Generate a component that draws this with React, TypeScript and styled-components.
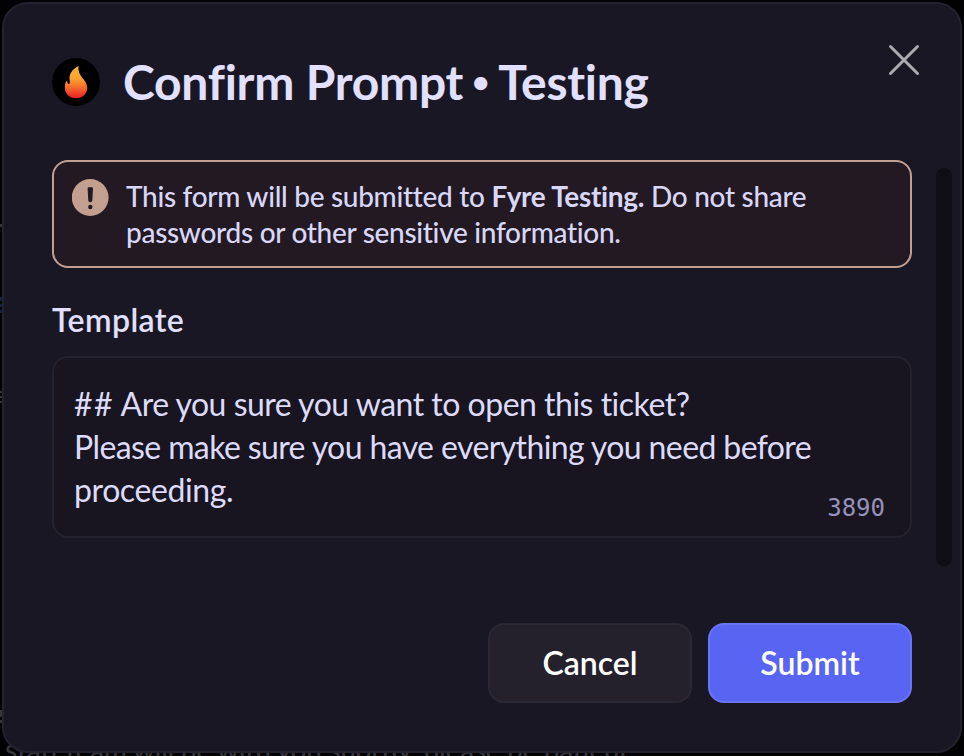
import React from "react";
import styled, { createGlobalStyle } from "styled-components";

const GlobalStyle = createGlobalStyle`
  *, *::before, *::after { box-sizing: border-box; }
  body {
    margin: 0;
    background: #020204;
    overflow: hidden;
    font-family: Lato, "Noto Sans", sans-serif;
    font-variant-ligatures: none;
  }
  button { font: inherit; }
`;

const Scene = styled.div`
  display: grid;
  grid-template: 756px / 964px;
  overflow: hidden;
  > * { grid-area: 1 / 1; }
`;

const Channel = styled.div`
  display: flex;
  flex-direction: column;
  justify-content: flex-end;
  overflow: hidden;
  color: #35353b;
`;

const Message = styled.p`
  margin: 0 0 -12px 5px;
  font-size: 28px;
  font-weight: 500;
  line-height: 38px;
  letter-spacing: -0.28px;
  white-space: nowrap;
`;

const Gutter = styled.div`
  display: flex;
  flex-direction: column;
  width: 3px;
  height: 756px;
  overflow: hidden;
`;

const Fragment = styled.span<{ $top: number; $height: number; $color: string }>`
  flex: none;
  height: ${(p) => p.$height}px;
  margin-top: ${(p) => p.$top}px;
  background: ${(p) => p.$color};
`;

const Dialog = styled.section`
  display: flex;
  flex-direction: column;
  width: 960px;
  height: 751px;
  margin: 2px;
  border: 2px solid #24222e;
  border-radius: 26px;
  background: #1a1724;
  overflow: hidden;
`;

const Header = styled.header`
  display: flex;
  flex: none;
  height: 156px;
  padding: 38px 38px 0 48px;
`;

const Avatar = styled.svg`
  flex: none;
  width: 48px;
  height: 48px;
  margin: 16px 24px 0 0;
`;

const Title = styled.h1`
  display: flex;
  flex: 1;
  align-items: center;
  height: 56px;
  margin: 12px 0 0 -1px;
  color: #e2e0ff;
  font-size: 48px;
  font-weight: 700;
  line-height: 56px;
  letter-spacing: -0.25px;
  white-space: nowrap;
`;

const Bullet = styled.span`
  display: flex;
  justify-content: center;
  width: 15px;
  margin: 0 10px 2px 10px;
  font: 700 42px/54px Inter, sans-serif;
  letter-spacing: 0;
`;

const CloseButton = styled.button`
  display: flex;
  width: 36px;
  height: 36px;
  padding: 0;
  border: 0;
  background: none;
`;

const Body = styled.div`
  display: flex;
  flex: none;
  justify-content: space-between;
  height: 428px;
  padding: 0 8px 0 48px;
`;

const Form = styled.div`
  width: 860px;
`;

const ScrollThumb = styled.div`
  width: 16px;
  height: 398px;
  margin-top: 8px;
  border-radius: 8px;
  background: #0f0d16;
`;

const Notice = styled.div`
  display: flex;
  gap: 17px;
  height: 108px;
  padding: 16px 18px;
  border: 2px solid #c39f90;
  border-radius: 16px;
  background: #221923;
`;

const NoticeIcon = styled.svg`
  flex: none;
  width: 37px;
  height: 37px;
  margin-top: 1px;
`;

const NoticeText = styled.p`
  margin: 0;
  color: #d9d7f7;
  font-size: 28px;
  font-weight: 500;
  line-height: 36px;
  letter-spacing: -0.3px;
  white-space: nowrap;
  strong { font-weight: 700; }
`;

const Label = styled.label`
  display: block;
  margin: 33px 0 17px;
  color: #e2e0ff;
  font-size: 32px;
  font-weight: 600;
  line-height: 38px;
  letter-spacing: 0.4px;
`;

const Field = styled.div`
  display: flex;
  justify-content: space-between;
  height: 182px;
  padding: 24px 25px 0 20px;
  border: 2px solid #24222e;
  border-radius: 16px;
  background: #181520;
`;

const FieldText = styled.div`
  color: #dddbf9;
  font-size: 32px;
  font-weight: 400;
  line-height: 43px;
  white-space: nowrap;
`;

const Line = styled.div<{ $tracking: number }>`
  letter-spacing: ${(p) => p.$tracking}px;
`;

const Hashes = styled.span`
  letter-spacing: 1.4px;
`;

const Counter = styled.span`
  align-self: flex-end;
  margin: 0 0 13px -80px;
  color: #9692b8;
  font: 24px/30px "DejaVu Sans Mono", monospace;
`;

const Footer = styled.footer`
  display: flex;
  justify-content: flex-end;
  gap: 16px;
  padding: 35px 48px 0;
`;

const Button = styled.button<{ $primary?: boolean }>`
  width: 204px;
  height: 80px;
  padding: 0 0 1px;
  border: 2px solid ${(p) => (p.$primary ? "#6a74f6" : "#2a2834")};
  border-radius: 16px;
  background: ${(p) => (p.$primary ? "#5865f2" : "#24212d")};
  color: #fff;
  font-size: 32px;
  font-weight: 600;
`;

export default function App() {
  return (
    <>
      <GlobalStyle />
      <Scene>
        <Channel>
          <Message>staff team will be with you shortly, please be patient!</Message>
        </Channel>
        <Gutter>
          <Fragment $top={224} $height={3} $color="#35353b" />
          <Fragment $top={70} $height={4} $color="#16233c" />
          <Fragment $top={3} $height={3} $color="#16233c" />
          <Fragment $top={3} $height={3} $color="#16233c" />
          <Fragment $top={78} $height={2} $color="#35353b" />
          <Fragment $top={3} $height={2} $color="#35353b" />
          <Fragment $top={3} $height={2} $color="#35353b" />
          <Fragment $top={307} $height={7} $color="#35353b" />
          <Fragment $top={3} $height={3} $color="#35353b" />
        </Gutter>
        <Dialog role="dialog" aria-label="Confirm Prompt">
          <Header>
            <Avatar viewBox="0 0 48 48">
              <defs>
                <linearGradient id="flame" x1="0" y1="0" x2="0" y2="1">
                  <stop offset="0.1" stopColor="#fbb034" />
                  <stop offset="0.4" stopColor="#faa22f" />
                  <stop offset="0.72" stopColor="#f3602b" />
                  <stop offset="1" stopColor="#ee1c25" />
                </linearGradient>
              </defs>
              <circle cx="24" cy="24" r="24" fill="#000" />
              <path
                d="M26.6 8C21.5 10.5 17.4 15 17.5 20C17.5 22 18.2 24 17.5 25.7C16.2 26.6 15 25.4 15.2 22.3C13.5 24 12.7 26.5 12.8 29.5C13 36 17.5 40.2 24 40.2C30.5 40.2 35.2 35.7 35.2 29.5C35.2 21.5 25 18.5 26.6 8Z"
                fill="url(#flame)"
              />
            </Avatar>
            <Title>
              <span>Confirm Prompt</span>
              <Bullet>•</Bullet>
              <span>Testing</span>
            </Title>
            <CloseButton aria-label="Close">
              <svg width="36" height="36" viewBox="0 0 36 36">
                <path d="M4.5 4.5L31.5 31.5M31.5 4.5L4.5 31.5" stroke="#ababb0" strokeWidth="3" strokeLinecap="round" />
              </svg>
            </CloseButton>
          </Header>
          <Body>
            <Form>
              <Notice>
                <NoticeIcon viewBox="0 0 37 37">
                  <circle cx="18.2" cy="18.5" r="18.4" fill="#c39f90" />
                  <path d="M15.6 9.5Q15.5 8.2 16.8 8.2H19.8Q21.1 8.2 21 9.5L20.3 21.5Q20.1 23.2 18.3 23.2Q16.5 23.2 16.3 21.5Z" fill="#221923" />
                  <circle cx="18.3" cy="28" r="2.2" fill="#221923" />
                </NoticeIcon>
                <NoticeText>
                  This form will be submitted to <strong>Fyre Testing.</strong> Do not share
                  <br />
                  passwords or other sensitive information.
                </NoticeText>
              </Notice>
              <Label>Template</Label>
              <Field>
                <FieldText>
                  <Line $tracking={-0.5}>
                    <Hashes>##</Hashes> Are you sure you want to open this ticket?
                  </Line>
                  <Line $tracking={-0.61}>Please make sure you have everything you need before</Line>
                  <Line $tracking={-0.4}>proceeding.</Line>
                </FieldText>
                <Counter>3890</Counter>
              </Field>
            </Form>
            <ScrollThumb />
          </Body>
          <Footer>
            <Button>Cancel</Button>
            <Button $primary>Submit</Button>
          </Footer>
        </Dialog>
      </Scene>
    </>
  );
}
